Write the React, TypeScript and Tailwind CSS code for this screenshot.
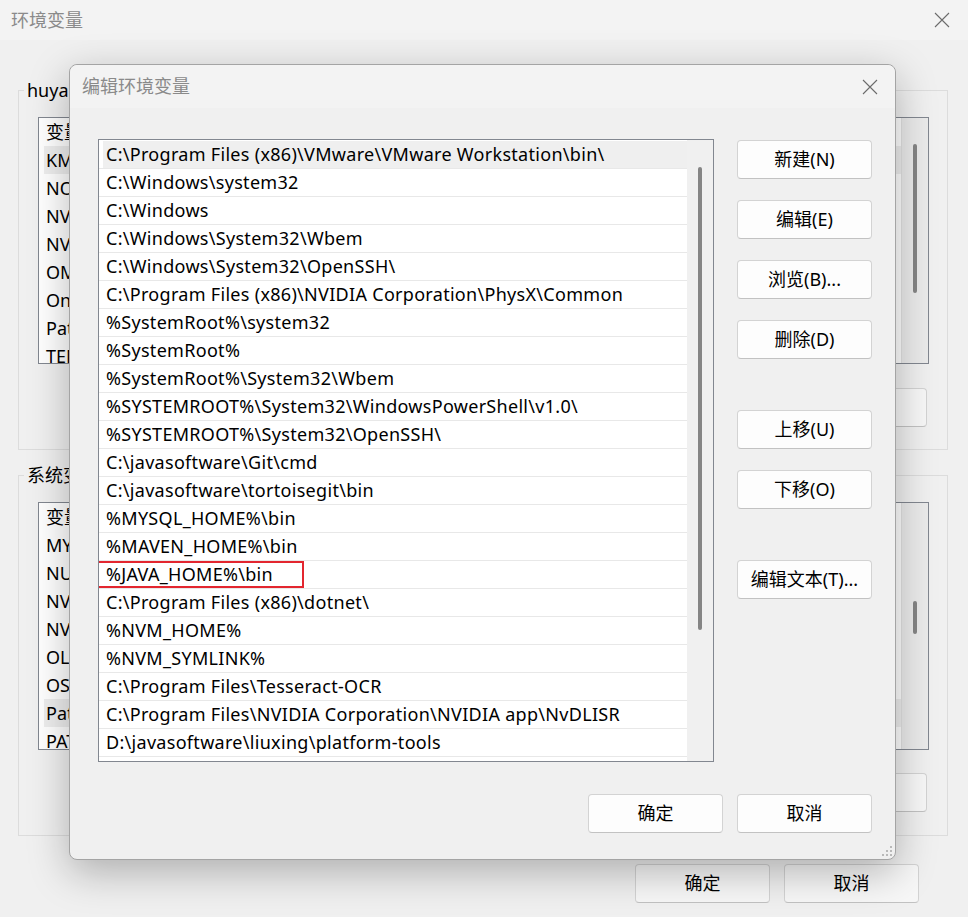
import clsx from 'clsx'
import { ReactNode } from 'react'

const paths = [
  'C:\\Program Files (x86)\\VMware\\VMware Workstation\\bin\\',
  'C:\\Windows\\system32',
  'C:\\Windows',
  'C:\\Windows\\System32\\Wbem',
  'C:\\Windows\\System32\\OpenSSH\\',
  'C:\\Program Files (x86)\\NVIDIA Corporation\\PhysX\\Common',
  '%SystemRoot%\\system32',
  '%SystemRoot%',
  '%SystemRoot%\\System32\\Wbem',
  '%SYSTEMROOT%\\System32\\WindowsPowerShell\\v1.0\\',
  '%SYSTEMROOT%\\System32\\OpenSSH\\',
  'C:\\javasoftware\\Git\\cmd',
  'C:\\javasoftware\\tortoisegit\\bin',
  '%MYSQL_HOME%\\bin',
  '%MAVEN_HOME%\\bin',
  '%JAVA_HOME%\\bin',
  'C:\\Program Files (x86)\\dotnet\\',
  '%NVM_HOME%',
  '%NVM_SYMLINK%',
  'C:\\Program Files\\Tesseract-OCR',
  'C:\\Program Files\\NVIDIA Corporation\\NVIDIA app\\NvDLISR',
  'D:\\javasoftware\\liuxing\\platform-tools',
  '',
]

// only the first letters of these show beside the dialog
const userVars = ['KMP_DUPLICATE_LIB_OK', 'NODE_PATH', 'NVM_HOME', 'NVM_SYMLINK', 'OMP_NUM_THREADS', 'OneDrive', 'Path', 'TEMP']
const systemVars = ['MYSQL_HOME', 'NUMBER_OF_PROCESSORS', 'NVM_HOME', 'NVM_SYMLINK', 'OLLAMA_MODELS', 'OS', 'Path', 'PATHEXT']

function CloseIcon() {
  return (
    <svg width="16" height="16" viewBox="0 0 16 16" fill="none" stroke="#6b6b6b" strokeWidth="1.1">
      <path d="M1 1 L15 15 M15 1 L1 15" />
    </svg>
  )
}

function WinButton({ children, className }: { children: ReactNode, className?: string }) {
  return (
    <button
      className={clsx(
        'h-[39px] w-[135px] shrink-0 rounded-[4px] border border-[#d3d3d3] border-b-[#c2c2c2] text-[18px] text-black',
        className ?? 'bg-[#fdfdfd]',
      )}
    >
      {children}
    </button>
  )
}

function VarList({ rows, highlight, className, thumbClass }: {
  rows: string[],
  highlight: number,
  className: string,
  thumbClass: string,
}) {
  return (
    <div className={clsx('ml-[19px] mr-[18px] flex overflow-hidden border border-[#828790] bg-white', className)}>
      <div className="flex-1 overflow-hidden">
        <div className="ml-[5px] flex h-[28px] items-center pl-[2px]">变量</div>
        {rows.map((name, i) => (
          <div
            key={name}
            className={clsx('ml-[5px] flex h-[28px] items-center whitespace-nowrap pl-[2px]', i === highlight && 'bg-[#eeeeee]')}
          >
            {name}
          </div>
        ))}
      </div>
      <div className="w-[27px] shrink-0 border-l border-[#e2e2e2] bg-[#ebebeb]">
        <div className={clsx('ml-[11px] w-[4px] rounded-full bg-[#858585]', thumbClass)} />
      </div>
    </div>
  )
}

function ResizeGrip() {
  return (
    <svg width="12" height="12" viewBox="0 0 12 12" fill="#b9b9b9">
      <rect x="9" y="1" width="2" height="2" />
      <rect x="5" y="5" width="2" height="2" />
      <rect x="9" y="5" width="2" height="2" />
      <rect x="1" y="9" width="2" height="2" />
      <rect x="5" y="9" width="2" height="2" />
      <rect x="9" y="9" width="2" height="2" />
    </svg>
  )
}

function EditDialog() {
  return (
    <div className="absolute left-[69px] top-[64px] flex h-[796px] w-[827px] flex-col rounded-[8px] border border-[#a4a4a4] bg-[#f0f0f0] shadow-[0_12px_40px_rgba(0,0,0,0.28)]">
      <div className="flex h-[43px] shrink-0 items-center justify-between rounded-t-[8px] bg-[#f3f3f3] pl-[12px] pr-[17px]">
        <span className="text-[18px] text-[#8a8a8a]">编辑环境变量</span>
        <CloseIcon />
      </div>

      <div className="relative flex flex-1 flex-col pl-[28px] pr-[23px] pt-[31px]">
        <div className="flex gap-[23px]">
          <div className="flex h-[623px] w-[616px] border border-[#828790] bg-white">
            <div className="flex-1 overflow-hidden pt-px text-[18px] tracking-[0.3px] text-black">
              {paths.map((path, i) => (
                <div key={i} className="relative h-[28px] border-b border-[#e8e8e8]">
                  <div className={clsx('flex h-full items-center whitespace-nowrap', i === 0 ? 'ml-[4px] bg-[#efefef] pl-[3px]' : 'pl-[7px]')}>
                    {path}
                  </div>
                  {path === '%JAVA_HOME%\\bin' && (
                    <div className="absolute left-[-18px] top-0 h-[27px] w-[223px] border-2 border-[#e3262f]" />
                  )}
                </div>
              ))}
            </div>
            <div className="w-[26px] shrink-0 bg-[#f0f0f0]">
              <div className="ml-[11px] mt-[27px] h-[463px] w-[4px] rounded-full bg-[#858585]" />
            </div>
          </div>

          <div className="flex flex-col pt-px">
            <WinButton>新建(N)</WinButton>
            <WinButton className="mt-[21px] bg-[#fdfdfd]">编辑(E)</WinButton>
            <WinButton className="mt-[21px] bg-[#fdfdfd]">浏览(B)...</WinButton>
            <WinButton className="mt-[21px] bg-[#fdfdfd]">删除(D)</WinButton>
            <WinButton className="mt-[51px] bg-[#fdfdfd]">上移(U)</WinButton>
            <WinButton className="mt-[21px] bg-[#fdfdfd]">下移(O)</WinButton>
            <WinButton className="mt-[51px] bg-[#fdfdfd]">编辑文本(T)...</WinButton>
          </div>
        </div>

        <div className="mt-[32px] flex justify-end gap-[14px]">
          <WinButton>确定</WinButton>
          <WinButton>取消</WinButton>
        </div>

        <div className="absolute bottom-[2px] right-[2px]">
          <ResizeGrip />
        </div>
      </div>
    </div>
  )
}

export default function App() {
  return (
    <div className="relative h-[917px] w-[968px] overflow-hidden bg-[#f0f0f0] font-['Noto_Sans','Noto_Sans_CJK_SC',sans-serif] text-[18px] text-black">
      <div className="flex h-[40px] items-center justify-between bg-[#f3f3f3] pl-[11px] pr-[18px]">
        <span className="text-[18px] text-[#8a8a8a]">环境变量</span>
        <CloseIcon />
      </div>

      <div className="pl-[18px] pr-[20px]">
        <fieldset className="mt-[38px] border border-[#dcdcdc] pb-[22px]">
          <legend className="ml-[5px] px-[3px] leading-[24px]">huya 的用户变量(U)</legend>
          <VarList rows={userVars} highlight={0} className="mt-[15px] h-[247px]" thumbClass="mt-[26px] h-[149px]" />
          <div className="mr-[20px] mt-[24px] flex justify-end gap-[14px]">
            <WinButton className="bg-[#f7f7f7]">新建(N)...</WinButton>
            <WinButton className="bg-[#f7f7f7]">编辑(E)...</WinButton>
            <WinButton className="bg-[#f7f7f7]">删除(D)</WinButton>
          </div>
        </fieldset>

        <fieldset className="mt-[13px] border border-[#dcdcdc] pb-[23px]">
          <legend className="ml-[5px] px-[3px] leading-[24px]">系统变量(S)</legend>
          <VarList rows={systemVars} highlight={6} className="mt-[15px] h-[248px]" thumbClass="mt-[98px] h-[33px]" />
          <div className="mr-[20px] mt-[23px] flex justify-end gap-[14px]">
            <WinButton className="bg-[#f7f7f7]">新建(W)...</WinButton>
            <WinButton className="bg-[#f7f7f7]">编辑(I)...</WinButton>
            <WinButton className="bg-[#f7f7f7]">删除(L)</WinButton>
          </div>
        </fieldset>

        <div className="mr-[29px] mt-[28px] flex justify-end gap-[14px]">
          <WinButton className="bg-[#f7f7f7]">确定</WinButton>
          <WinButton className="bg-[#f7f7f7]">取消</WinButton>
        </div>
      </div>

      <EditDialog />
    </div>
  )
}
